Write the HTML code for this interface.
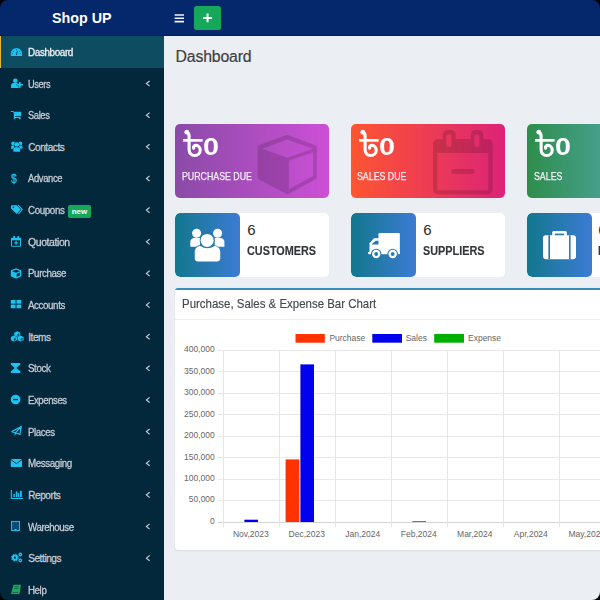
<!DOCTYPE html>
<html><head><meta charset="utf-8"><style>
html,body{margin:0;padding:0;background:#000;width:600px;height:600px;overflow:hidden}
*{box-sizing:border-box}
#app{position:absolute;left:0;top:0;width:600px;height:600px;border-radius:8px;overflow:hidden;background:transparent;font-family:"Liberation Sans",sans-serif}
.abs{position:absolute}
#cbg{left:163px;top:30px;width:437px;height:570px;background:#ebeef2}
svg{position:absolute;overflow:visible}
#top{left:0;top:0;width:600px;height:36px;background:#05276c;border-bottom:1px solid #021c55}
#brand{left:52px;top:8px;font-weight:bold;font-size:14.3px;color:#fff;line-height:20px;white-space:nowrap}
#side{left:0;top:36px;width:164px;height:564px;background:#03273b}
.lbl{position:absolute;left:28.2px;font-size:10px;line-height:12px;color:#c6ccd4;white-space:nowrap;letter-spacing:-0.4px}
#title{left:175.5px;top:46.5px;font-size:15.8px;line-height:20px;color:#3d3f43;letter-spacing:-0.15px;-webkit-text-stroke:.2px #3d3f43}
.card{position:absolute;top:123.5px;width:154px;height:74.5px;border-radius:5px;overflow:hidden}
.cap{position:absolute;top:168.5px;font-size:11.5px;line-height:14px;color:#f6eefa;-webkit-text-stroke:.25px #f6eefa;white-space:nowrap;transform-origin:0 0;transform:scaleX(.765)}
.ibox{position:absolute;top:212.5px;width:154px;height:64.5px;border-radius:5px;background:#fff;overflow:hidden}
.ibi{position:absolute;left:0;top:0;width:64.5px;height:64.5px;border-radius:5px;background:linear-gradient(90deg,#12778e,#3c7cd4)}
.num{position:absolute;left:72.3px;top:7.2px;font-size:15px;line-height:20px;color:#2a2d33}
.itx{position:absolute;left:72.4px;top:31.8px;font-size:12.4px;font-weight:bold;line-height:14px;color:#33363b;-webkit-text-stroke:.15px #33363b;white-space:nowrap;transform-origin:0 0;transform:scaleX(.875)}
#chart{left:175px;top:288px;width:440px;height:261.5px;background:#fff;border-radius:3px;box-shadow:0 0 1px rgba(0,0,0,.1),0 1px 2px rgba(0,0,0,.07);overflow:hidden}
#ctop{left:0;top:0;width:440px;height:2px;background:#3a8cc0}
#ctitle{left:6.8px;top:8px;font-size:12.2px;line-height:16px;color:#45484d;-webkit-text-stroke:.15px #45484d;white-space:nowrap;transform-origin:0 0;transform:scaleX(.94)}
#chdr{left:0;top:31px;width:440px;height:1px;background:#edeff1}
.ax{font-size:8.5px;line-height:10px;color:#666;white-space:nowrap;position:absolute}
.yl{text-align:right;width:50px}
.xl{text-align:center;width:60px}
</style></head><body>
<div id="app">
<div id="cbg" class="abs"></div>
<div id="top" class="abs"></div>
<div id="brand" class="abs">Shop UP</div>
<div class="abs" style="left:194px;top:5.8px;width:26.5px;height:24.2px;background:#16a85a;border-radius:2.5px"></div>
<svg width="60" height="36" style="left:165px;top:0" viewBox="165 0 60 36"><path d="M174.6,15 H184 M174.6,18.3 H184 M174.6,21.6 H184" stroke="#f2f3f8" stroke-width="1.55"/><path d="M203.1,17.9 H212 M207.55,13.5 V22.3" stroke="#fff" stroke-width="2"/></svg>
<div id="title" class="abs">Dashboard</div>
<div class="card" style="left:175px;background:linear-gradient(90deg,#8a4ba7,#cd4fd7)"></div>
<div class="card" style="left:351px;background:linear-gradient(90deg,#fe5531,#dc2378)"></div>
<div class="card" style="left:527px;background:linear-gradient(90deg,#2e8d4b,#60b3d2)"></div>
<svg width="65" height="65" style="left:255px;top:132px" viewBox="255 132 65 65"><defs><mask id="cubem" maskUnits="userSpaceOnUse" x="250" y="128" width="75" height="75"><path d="M287,136.9 L314.8,147.2 V177.6 L287.5,192.2 L259.7,177.6 V147.2 Z" fill="#fff" stroke="#fff" stroke-width="4" stroke-linejoin="round"/><path d="M262.8,148.8 L287,139.8 L312.2,148.8 L287.5,157.4 Z" fill="#000" stroke="#000" stroke-width=".6" stroke-linejoin="round"/><path d="M289.2,160.8 L312.9,152.7 V175.8 L289.2,188.8 Z" fill="#000" stroke="#000" stroke-width=".6" stroke-linejoin="round"/></mask></defs><rect x="250" y="128" width="75" height="75" fill="#000" fill-opacity=".15" mask="url(#cubem)"/></svg>
<svg width="60" height="64.3" style="left:433.3px;top:130px" viewBox="0 0 60 64.3"><defs><mask id="calm" maskUnits="userSpaceOnUse" x="-2" y="-2" width="64" height="70"><rect x="0" y="9" width="59.7" height="55.3" rx="5" fill="#fff"/><rect x="9.7" y="0" width="13" height="20" rx="5" fill="#fff"/><rect x="37.7" y="0" width="12.7" height="20" rx="5" fill="#fff"/><rect x="4.4" y="23" width="50.9" height="37.3" fill="#000"/><rect x="13.4" y="4.3" width="5" height="12.7" rx="2.5" fill="#000"/><rect x="41.4" y="4.3" width="5" height="12.7" rx="2.5" fill="#000"/><rect x="18.4" y="39" width="22.9" height="4.7" rx="1.5" fill="#fff"/></mask></defs><rect x="-2" y="-2" width="64" height="70" fill="#000" fill-opacity=".15" mask="url(#calm)"/></svg>
<svg width="44" height="32" style="left:178px;top:126px" viewBox="0 0 44 32"><circle cx="8.8" cy="6.2" r="2.4" fill="#fff"/><path d="M8.8,6.6 C10.6,6.8 11.1,8.2 11.1,10 L11.1,23.5 C11.1,27.4 13.6,29.5 16.6,29.5 C20,29.5 22.2,27 22.2,24.2 C22.2,21.3 20.2,19.4 17.9,19.4 C16.2,19.4 15.2,20.6 15.6,22.2" fill="none" stroke="#fff" stroke-width="3.1" stroke-linecap="round"/><rect x="5.1" y="13" width="19.5" height="2.7" fill="#fff"/></svg><div class="abs" style="left:203.2px;top:135px;font-size:24px;line-height:24px;font-weight:bold;color:#fff;transform-origin:0 0;transform:scaleX(1.2)">0</div>
<svg width="44" height="32" style="left:354px;top:126px" viewBox="0 0 44 32"><circle cx="8.8" cy="6.2" r="2.4" fill="#fff"/><path d="M8.8,6.6 C10.6,6.8 11.1,8.2 11.1,10 L11.1,23.5 C11.1,27.4 13.6,29.5 16.6,29.5 C20,29.5 22.2,27 22.2,24.2 C22.2,21.3 20.2,19.4 17.9,19.4 C16.2,19.4 15.2,20.6 15.6,22.2" fill="none" stroke="#fff" stroke-width="3.1" stroke-linecap="round"/><rect x="5.1" y="13" width="19.5" height="2.7" fill="#fff"/></svg><div class="abs" style="left:379.2px;top:135px;font-size:24px;line-height:24px;font-weight:bold;color:#fff;transform-origin:0 0;transform:scaleX(1.2)">0</div>
<svg width="44" height="32" style="left:530px;top:126px" viewBox="0 0 44 32"><circle cx="8.8" cy="6.2" r="2.4" fill="#fff"/><path d="M8.8,6.6 C10.6,6.8 11.1,8.2 11.1,10 L11.1,23.5 C11.1,27.4 13.6,29.5 16.6,29.5 C20,29.5 22.2,27 22.2,24.2 C22.2,21.3 20.2,19.4 17.9,19.4 C16.2,19.4 15.2,20.6 15.6,22.2" fill="none" stroke="#fff" stroke-width="3.1" stroke-linecap="round"/><rect x="5.1" y="13" width="19.5" height="2.7" fill="#fff"/></svg><div class="abs" style="left:555.2px;top:135px;font-size:24px;line-height:24px;font-weight:bold;color:#fff;transform-origin:0 0;transform:scaleX(1.2)">0</div>
<div class="cap" style="left:181.7px">PURCHASE DUE</div>
<div class="cap" style="left:357.3px">SALES DUE</div>
<div class="cap" style="left:533.5px">SALES</div>
<div class="ibox" style="left:175px"><div class="ibi"></div><div class="num" style="left:72.3px">6</div><div class="itx" style="left:72.4px">CUSTOMERS</div></div>
<div class="ibox" style="left:351px"><div class="ibi"></div><div class="num" style="left:72.3px">6</div><div class="itx" style="left:72.4px">SUPPLIERS</div></div>
<div class="ibox" style="left:527px"><div class="ibi"></div><div class="num" style="left:71.3px">6</div><div class="itx" style="left:71.4px">PRODUCTS</div></div>
<svg width="35" height="34" style="left:190px;top:228px" viewBox="0 0 35 34"><defs><mask id="um" maskUnits="userSpaceOnUse" x="-2" y="-2" width="40" height="40"><circle cx="6.6" cy="5.25" r="4.5" fill="#fff"/><circle cx="27.6" cy="5.25" r="4.5" fill="#fff"/><path d="M0.3,18.7 V14 C0.3,11.8 2,10.1 4.2,10.1 H10 V18.7 Z" fill="#fff"/><path d="M34.4,18.7 V14 C34.4,11.8 32.7,10.1 30.5,10.1 H24.7 V18.7 Z" fill="#fff"/><circle cx="17.1" cy="12.4" r="7.4" fill="#000"/><path d="M3.9,34.5 V23.5 C3.9,19.8 6.8,17.2 10.4,17.2 H23.8 C27.4,17.2 30.3,19.8 30.3,23.5 V34.5 Z" fill="#000"/><circle cx="17.1" cy="12.4" r="6.5" fill="#fff"/><path d="M4.75,30.4 V23.8 C4.75,20.6 7.2,18 10.5,18 C13,19.6 15,20.2 17.5,20.2 C20,20.2 22,19.6 24.5,18 C27.8,18 30.25,20.6 30.25,23.8 V30.4 C30.25,32.1 28.9,33.4 27.2,33.4 H7.8 C6.1,33.4 4.75,32.1 4.75,30.4 Z" fill="#fff"/></mask></defs><rect x="-2" y="-2" width="40" height="40" fill="#fff" mask="url(#um)"/></svg>
<svg width="32" height="27" style="left:367.9px;top:232.9px" viewBox="0 0 32 27"><defs><mask id="tm" maskUnits="userSpaceOnUse" x="-2" y="-2" width="40" height="32"><rect x="10.5" y="0" width="21.35" height="20.6" rx="1.2" fill="#fff"/><path d="M1.5,20.6 V10.3 L6,5.2 H11 V20.6 Z" fill="#fff"/><rect x="0" y="18.7" width="31.85" height="2.65" rx="1.3" fill="#fff"/><path d="M3.4,11.6 L7.7,7.85 H10.5 V11.6 Z" fill="#000"/><circle cx="8.2" cy="21" r="5.3" fill="#000"/><circle cx="24.7" cy="21" r="5.3" fill="#000"/><circle cx="8.2" cy="21" r="4.2" fill="#fff"/><circle cx="24.7" cy="21" r="4.2" fill="#fff"/><circle cx="8.2" cy="21" r="1.9" fill="#000"/><circle cx="24.7" cy="21" r="1.9" fill="#000"/></mask></defs><rect x="-2" y="-2" width="40" height="32" fill="#fff" mask="url(#tm)"/></svg>
<svg width="34" height="29" style="left:542.6px;top:231.25px" viewBox="0 0 34 29"><defs><mask id="bm" maskUnits="userSpaceOnUse" x="-2" y="-2" width="40" height="34"><rect x="9.2" y="0" width="14.6" height="6" rx="1.5" fill="#fff"/><rect x="11.9" y="2.6" width="9.2" height="3" fill="#000"/><rect x="0" y="4.35" width="33" height="23.8" rx="2.8" fill="#fff"/><rect x="5.4" y="4.35" width="1.6" height="23.8" fill="#000"/><rect x="26" y="4.35" width="1.6" height="23.8" fill="#000"/></mask></defs><rect x="-2" y="-2" width="40" height="34" fill="#fff" mask="url(#bm)"/></svg>
<div id="side" class="abs"></div>
<div class="abs" style="left:0;top:36px;width:164px;height:32px;background:#0e4c62"></div>
<div class="abs" style="left:0;top:36px;width:1.3px;height:32px;background:#e5b52a"></div>
<div class="lbl" style="top:46.90px;color:#eef2f5;-webkit-text-stroke:.28px #eef2f5;transform-origin:0 0;transform:scaleX(0.991)">Dashboard</div>
<div class="lbl" style="top:78.54px;color:#c6ccd4;-webkit-text-stroke:.28px #c6ccd4;transform-origin:0 0;transform:scaleX(0.919)">Users</div>
<div class="lbl" style="top:110.18px;color:#c6ccd4;-webkit-text-stroke:.28px #c6ccd4;transform-origin:0 0;transform:scaleX(0.933)">Sales</div>
<div class="lbl" style="top:141.82px;color:#c6ccd4;-webkit-text-stroke:.28px #c6ccd4;transform-origin:0 0;transform:scaleX(1.000)">Contacts</div>
<div class="lbl" style="top:173.46px;color:#c6ccd4;-webkit-text-stroke:.28px #c6ccd4;transform-origin:0 0;transform:scaleX(0.946)">Advance</div>
<div class="lbl" style="top:205.10px;color:#c6ccd4;-webkit-text-stroke:.28px #c6ccd4;transform-origin:0 0;transform:scaleX(0.980)">Coupons</div>
<div class="lbl" style="top:236.74px;color:#c6ccd4;-webkit-text-stroke:.28px #c6ccd4;transform-origin:0 0;transform:scaleX(1.050)">Quotation</div>
<div class="lbl" style="top:268.38px;color:#c6ccd4;-webkit-text-stroke:.28px #c6ccd4;transform-origin:0 0;transform:scaleX(0.975)">Purchase</div>
<div class="lbl" style="top:300.02px;color:#c6ccd4;-webkit-text-stroke:.28px #c6ccd4;transform-origin:0 0;transform:scaleX(0.974)">Accounts</div>
<div class="lbl" style="top:331.66px;color:#c6ccd4;-webkit-text-stroke:.28px #c6ccd4;transform-origin:0 0;transform:scaleX(1.000)">Items</div>
<div class="lbl" style="top:363.30px;color:#c6ccd4;-webkit-text-stroke:.28px #c6ccd4;transform-origin:0 0;transform:scaleX(0.975)">Stock</div>
<div class="lbl" style="top:394.94px;color:#c6ccd4;-webkit-text-stroke:.28px #c6ccd4;transform-origin:0 0;transform:scaleX(0.951)">Expenses</div>
<div class="lbl" style="top:426.58px;color:#c6ccd4;-webkit-text-stroke:.28px #c6ccd4;transform-origin:0 0;transform:scaleX(0.964)">Places</div>
<div class="lbl" style="top:458.22px;color:#c6ccd4;-webkit-text-stroke:.28px #c6ccd4;transform-origin:0 0;transform:scaleX(0.978)">Messaging</div>
<div class="lbl" style="top:489.86px;color:#c6ccd4;-webkit-text-stroke:.28px #c6ccd4;transform-origin:0 0;transform:scaleX(1.000)">Reports</div>
<div class="lbl" style="top:521.50px;color:#c6ccd4;-webkit-text-stroke:.28px #c6ccd4;transform-origin:0 0;transform:scaleX(0.971)">Warehouse</div>
<div class="lbl" style="top:553.14px;color:#c6ccd4;-webkit-text-stroke:.28px #c6ccd4;transform-origin:0 0;transform:scaleX(1.000)">Settings</div>
<div class="lbl" style="top:584.78px;color:#c6ccd4;-webkit-text-stroke:.28px #c6ccd4;transform-origin:0 0;transform:scaleX(0.970)">Help</div>
<div class="abs" style="left:67.8px;top:204.9px;width:22.8px;height:12.9px;border-radius:2px;background:#17a75b"></div>
<div class="abs" style="left:71.8px;top:205.9px;font-size:7.9px;line-height:12px;font-weight:bold;color:#fff;letter-spacing:0px">new</div>
<svg width="600" height="600" style="left:0;top:0" viewBox="0 0 600 600"><g fill="#1cc3f0"><path d="M10.85,56 V53.5 A5.625,5.625 0 0 1 22.1,53.5 V56 Z"/><g fill="#0e4c62"><circle cx="16.5" cy="49.8" r=".55"/><circle cx="13.4" cy="51.2" r=".55"/><circle cx="19.6" cy="51.2" r=".55"/><circle cx="12.4" cy="53.8" r=".55"/><circle cx="20.6" cy="53.8" r=".55"/></g><path d="M16.4,55.2 L17.4,50.8" stroke="#0e4c62" stroke-width="1" fill="none"/><circle cx="15.35" cy="80.75" r="2.35"/><path d="M11,88 V85.6 C11,84 12,83 13.6,83 H17.2 C18.6,83 19.6,84 19.6,85.6 V88 Z"/><path d="M17,83.9 h6 v1.6 h-6 z M18.95,82 h1.7 v5.8 h-1.7 z" stroke="#03273b" stroke-width=".6" paint-order="stroke"/><path d="M10.9,110.9 h2.3 l0.6,0.9 h7.4 v4.2 h-6.3 v0.8 h5.6 v2.4 h-1.5 v-1.2 h-3.7 v1.2 h-1.5 v-6.5 l-0.8,-0.6 h-2.1 z"/><circle cx="13.2" cy="143.4" r="1.9"/><circle cx="20.3" cy="143.4" r="1.9"/><path d="M11,148.8 v-1.6 c0,-1 .7,-1.7 1.7,-1.7 h1.6 v3.3 z M22.5,148.8 v-1.6 c0,-1 -.7,-1.7 -1.7,-1.7 h-1.6 v3.3 z"/><g stroke="#03273b" stroke-width=".7" paint-order="stroke"><circle cx="16.75" cy="144.6" r="2.4"/><path d="M13.4,151.75 v-2.6 c0,-1.2 .9,-2 2,-2 h2.7 c1.1,0 2,.8 2,2 v2.6 z"/></g><path d="M11,206.2 c0,-.6 .4,-1 1,-1 H16.9 L20.8,209.6 L16.7,213.9 L11,208.4 Z"/><circle cx="13.3" cy="207.3" r=".75" fill="#03273b"/><path d="M18.2,205.2 L22.3,209.6 L18.3,213.9" fill="none" stroke="#1cc3f0" stroke-width="1.1"/><path d="M11.5,238.4 H20.5 V246.2 H11.5 Z" fill="none" stroke="#1cc3f0" stroke-width="1"/><rect x="11" y="237.9" width="10" height="2.4"/><rect x="13.3" y="236.1" width="1.7" height="2.4" rx=".5"/><rect x="17.3" y="236.1" width="1.7" height="2.4" rx=".5"/><path d="M14.4,242.9 H17.8 M16.1,241.2 V244.6" stroke="#1cc3f0" stroke-width="1.3"/><path transform="translate(10.8,268.25) scale(0.0205)" fill-rule="evenodd" d="M239.1 6.3l-208 78c-18.7 7-31.1 25-31.1 45v225.1c0 18.2 10.3 34.8 26.5 42.9l208 104c13.5 6.8 29.4 6.8 42.9 0l208-104c16.3-8.1 26.5-24.8 26.5-42.9V129.3c0-20-12.4-37.9-31.1-44.9l-208-78C262 2.2 250 2.2 239.1 6.3zM256 68.4l192 72v1.1l-192 78-192-78v-1.1l192-72zm32 356V275.5l160-65v133.9l-160 80z"/><rect x="10.8" y="300" width="4.75" height="3.7"/><rect x="16.5" y="300" width="4.75" height="3.7"/><rect x="10.8" y="304.55" width="4.75" height="3.7"/><rect x="16.5" y="304.55" width="4.75" height="3.7"/><path d="M17.25,331.3 L20.25,332.7 V335.90000000000003 L17.25,337.3 L14.25,335.90000000000003 V332.7 Z" stroke="#03273b" stroke-width=".6" paint-order="stroke"/><path d="M17.25,334.3 L19.25,333.3 V335.7 L17.25,336.7 Z" fill="#03273b" opacity=".7"/><path d="M13.9,335.6 L16.9,337.0 V340.20000000000005 L13.9,341.6 L10.9,340.20000000000005 V337.0 Z" stroke="#03273b" stroke-width=".6" paint-order="stroke"/><path d="M13.9,338.6 L15.9,337.6 V340.0 L13.9,341.0 Z" fill="#03273b" opacity=".7"/><path d="M20.6,335.6 L23.6,337.0 V340.20000000000005 L20.6,341.6 L17.6,340.20000000000005 V337.0 Z" stroke="#03273b" stroke-width=".6" paint-order="stroke"/><path d="M20.6,338.6 L22.6,337.6 V340.0 L20.6,341.0 Z" fill="#03273b" opacity=".7"/><path d="M10.8,363 H20.4 V364.4 L16.4,368 L20.4,371.6 V373 H10.8 V371.6 L14.8,368 L10.8,364.4 Z"/><circle cx="15.6" cy="399.5" r="4.8"/><rect x="13.2" y="398.9" width="4.8" height="1.3" fill="#03273b"/><path d="M11.8,431.6 L21.3,426.5 L19.9,434.3 L16,433 Z M21.3,426.5 L15.6,432.6" fill="none" stroke="#1cc3f0" stroke-width="1.25" stroke-linejoin="round"/><path d="M15,432.3 L16.6,433.2 L14.4,436.1 Z"/><rect x="10.8" y="459" width="11.2" height="8" rx=".8"/><path d="M10.8,459.6 L16.4,463.6 L22,459.6" fill="none" stroke="#03273b" stroke-width=".9"/><path d="M11.35,490 V498.45 H22.9" fill="none" stroke="#1cc3f0" stroke-width="1.1"/><rect x="13.4" y="494" width="1.5" height="3.1"/><rect x="15.8" y="491.4" width="1.5" height="5.7"/><rect x="17.75" y="492.9" width="1.4" height="4.2"/><rect x="20" y="490.8" width="1.8" height="6.3"/><rect x="11.45" y="521.4" width="8" height="9.1" fill="#1a8fd0" fill-opacity=".45" stroke="#1cc3f0" stroke-width=".95"/><path d="M15.45,522 V528.5 M12,523.8 H19 M12,525.9 H19 M12,528 H19" stroke="#03273b" stroke-width=".5" opacity=".5"/><circle cx="13.3" cy="529.3" r=".6" fill="#03273b"/><circle cx="17.6" cy="529.3" r=".6" fill="#03273b"/><path d="M13.9,530.5 A1.55,1.45 0 0 1 17,530.5 Z"/><circle cx="14.9" cy="557.65" r="2.1" fill="none" stroke="#1cc3f0" stroke-width="2"/><circle cx="14.9" cy="557.65" r="3.45" fill="none" stroke="#1cc3f0" stroke-width="1" stroke-dasharray="1.35 1.36"/><circle cx="20.3" cy="554.5" r="1.25" fill="none" stroke="#1cc3f0" stroke-width="1.3"/><circle cx="20.3" cy="560.4" r="1.25" fill="none" stroke="#1cc3f0" stroke-width="1.3"/></g><path d="M13.6,584.8 H21 L19.9,591.8 L19.3,594 H11 L11.6,591.8 Z" fill="#1ca75a"/><path d="M14.7,586.7 H18.6 M14.5,588.3 H18.4 M12.6,592.5 H18.2" stroke="#03273b" stroke-width=".6" opacity=".75"/><path d="M149.6,80.94 L146.4,83.54 L149.6,86.14" fill="none" stroke="#c6ccd4" stroke-width="1.15"/><path d="M149.6,112.58 L146.4,115.18 L149.6,117.78" fill="none" stroke="#c6ccd4" stroke-width="1.15"/><path d="M149.6,144.22 L146.4,146.82 L149.6,149.42" fill="none" stroke="#c6ccd4" stroke-width="1.15"/><path d="M149.6,175.86 L146.4,178.46 L149.6,181.06" fill="none" stroke="#c6ccd4" stroke-width="1.15"/><path d="M149.6,207.50 L146.4,210.10 L149.6,212.70" fill="none" stroke="#c6ccd4" stroke-width="1.15"/><path d="M149.6,239.14 L146.4,241.74 L149.6,244.34" fill="none" stroke="#c6ccd4" stroke-width="1.15"/><path d="M149.6,270.78 L146.4,273.38 L149.6,275.98" fill="none" stroke="#c6ccd4" stroke-width="1.15"/><path d="M149.6,302.42 L146.4,305.02 L149.6,307.62" fill="none" stroke="#c6ccd4" stroke-width="1.15"/><path d="M149.6,334.06 L146.4,336.66 L149.6,339.26" fill="none" stroke="#c6ccd4" stroke-width="1.15"/><path d="M149.6,365.70 L146.4,368.30 L149.6,370.90" fill="none" stroke="#c6ccd4" stroke-width="1.15"/><path d="M149.6,397.34 L146.4,399.94 L149.6,402.54" fill="none" stroke="#c6ccd4" stroke-width="1.15"/><path d="M149.6,428.98 L146.4,431.58 L149.6,434.18" fill="none" stroke="#c6ccd4" stroke-width="1.15"/><path d="M149.6,460.62 L146.4,463.22 L149.6,465.82" fill="none" stroke="#c6ccd4" stroke-width="1.15"/><path d="M149.6,492.26 L146.4,494.86 L149.6,497.46" fill="none" stroke="#c6ccd4" stroke-width="1.15"/><path d="M149.6,523.90 L146.4,526.50 L149.6,529.10" fill="none" stroke="#c6ccd4" stroke-width="1.15"/><path d="M149.6,555.54 L146.4,558.14 L149.6,560.74" fill="none" stroke="#c6ccd4" stroke-width="1.15"/></svg>
<div class="abs" style="left:11.1px;top:171.6px;font-size:12.6px;line-height:14px;color:#1cc3f0;-webkit-text-stroke:.35px #1cc3f0;transform-origin:0 0;transform:scaleX(.82)">$</div>
<div id="chart" class="abs">
<div id="ctop" class="abs"></div>
<div id="ctitle" class="abs">Purchase, Sales &amp; Expense Bar Chart</div>
<div id="chdr" class="abs"></div>
<svg width="440" height="262" style="left:0;top:0" viewBox="175 288 440 262"><line x1="218" y1="350.5" x2="620" y2="350.5" stroke="#e8e8e8" stroke-width="1"/><line x1="218" y1="371.5" x2="620" y2="371.5" stroke="#e8e8e8" stroke-width="1"/><line x1="218" y1="393.5" x2="620" y2="393.5" stroke="#e8e8e8" stroke-width="1"/><line x1="218" y1="414.5" x2="620" y2="414.5" stroke="#e8e8e8" stroke-width="1"/><line x1="218" y1="436.5" x2="620" y2="436.5" stroke="#e8e8e8" stroke-width="1"/><line x1="218" y1="457.5" x2="620" y2="457.5" stroke="#e8e8e8" stroke-width="1"/><line x1="218" y1="479.5" x2="620" y2="479.5" stroke="#e8e8e8" stroke-width="1"/><line x1="218" y1="500.5" x2="620" y2="500.5" stroke="#e8e8e8" stroke-width="1"/><line x1="218" y1="522.5" x2="620" y2="522.5" stroke="#d4d4d4" stroke-width="1"/><line x1="223.5" y1="350.30" x2="223.5" y2="527.3" stroke="#e6e6e6" stroke-width="1"/><line x1="279.5" y1="350.30" x2="279.5" y2="527.3" stroke="#e6e6e6" stroke-width="1"/><line x1="335.5" y1="350.30" x2="335.5" y2="527.3" stroke="#e6e6e6" stroke-width="1"/><line x1="391.5" y1="350.30" x2="391.5" y2="527.3" stroke="#e6e6e6" stroke-width="1"/><line x1="447.5" y1="350.30" x2="447.5" y2="527.3" stroke="#e6e6e6" stroke-width="1"/><line x1="503.5" y1="350.30" x2="503.5" y2="527.3" stroke="#e6e6e6" stroke-width="1"/><line x1="559.5" y1="350.30" x2="559.5" y2="527.3" stroke="#e6e6e6" stroke-width="1"/><line x1="615.5" y1="350.30" x2="615.5" y2="527.3" stroke="#e6e6e6" stroke-width="1"/><rect x="244.4" y="519.7" width="13.6" height="2.3" fill="#0000ee"/><rect x="285.6" y="459.4" width="13.8" height="62.6" fill="#ff3300"/><rect x="300.4" y="364.4" width="13.6" height="157.6" fill="#0000ee"/><rect x="412.3" y="521" width="13.7" height="1" fill="#0000ee" fill-opacity=".6"/><rect x="295.5" y="334" width="29.3" height="8.7" fill="#ff3300"/><rect x="372.3" y="334" width="29.7" height="8.7" fill="#0000ee"/><rect x="434.2" y="334" width="29.8" height="8.7" fill="#00b000"/></svg>
<div class="ax" style="left:154.39999999999998px;top:44.80000000000001px">Purchase</div>
<div class="ax" style="left:230.7px;top:44.80000000000001px">Sales</div>
<div class="ax" style="left:293px;top:44.80000000000001px">Expense</div>
<div class="ax yl" style="left:-10.199999999999989px;top:56.20px">400,000</div>
<div class="ax yl" style="left:-10.199999999999989px;top:77.66px">350,000</div>
<div class="ax yl" style="left:-10.199999999999989px;top:99.12px">300,000</div>
<div class="ax yl" style="left:-10.199999999999989px;top:120.59px">250,000</div>
<div class="ax yl" style="left:-10.199999999999989px;top:142.05px">200,000</div>
<div class="ax yl" style="left:-10.199999999999989px;top:163.51px">150,000</div>
<div class="ax yl" style="left:-10.199999999999989px;top:184.97px">100,000</div>
<div class="ax yl" style="left:-10.199999999999989px;top:206.44px">50,000</div>
<div class="ax yl" style="left:-10.199999999999989px;top:227.90px">0</div>
<div class="ax xl" style="left:45.80000000000001px;top:241px">Nov,2023</div>
<div class="ax xl" style="left:101.80000000000001px;top:241px">Dec,2023</div>
<div class="ax xl" style="left:157.8px;top:241px">Jan,2024</div>
<div class="ax xl" style="left:213.8px;top:241px">Feb,2024</div>
<div class="ax xl" style="left:269.8px;top:241px">Mar,2024</div>
<div class="ax xl" style="left:325.8px;top:241px">Apr,2024</div>
<div class="ax xl" style="left:381.79999999999995px;top:241px">May,2024</div>
<div class="ax xl" style="left:437.79999999999995px;top:241px">Jun,2024</div>
</div>
</div>
</body></html>
